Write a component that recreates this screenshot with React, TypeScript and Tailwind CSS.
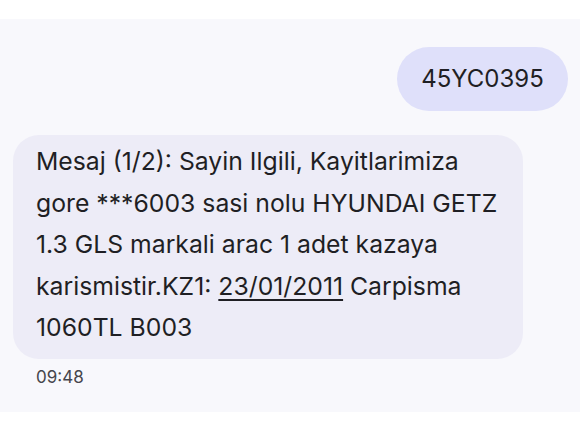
export default function App() {
  const font = { fontFamily: "Inter, Roboto, sans-serif" }

  return (
    <div className="w-[580px] h-[435px] bg-white flex flex-col" style={font}>
      <div className="h-[19px] shrink-0" />
      {/* conversation area */}
      <div className="h-[393px] bg-[#f8f8fc] flex flex-col">
        <div className="flex justify-end pt-[28px] pr-[12px]">
          <div className="h-[64px] w-[171px] rounded-full bg-[#dfe0fa] flex items-center justify-center text-[24px] text-[#1f1f24]">
            45YC0395
          </div>
        </div>

        <div className="pl-[13px] pt-[24px]">
          <div className="w-[510px] h-[224px] rounded-[26px] bg-[#edecf7] pl-[23px] pt-[6px] text-[24.75px] leading-[41.5px] text-[#1f1f24]">
            <div className="whitespace-nowrap">Mesaj (1/2): Sayin Ilgili, Kayitlarimiza</div>
            <div className="whitespace-nowrap">gore ***6003 sasi nolu HYUNDAI GETZ</div>
            <div className="whitespace-nowrap">1.3 GLS markali arac 1 adet kazaya</div>
            <div className="whitespace-nowrap">
              karismistir.KZ1: <span className="underline underline-offset-[4px] decoration-[2px]">23/01/2011</span> Carpisma
            </div>
            <div className="whitespace-nowrap">1060TL B003</div>
          </div>
          <div className="pl-[23px] pt-[6px] text-[17px] text-[#46464c]">09:48</div>
        </div>
      </div>
    </div>
  )
}
